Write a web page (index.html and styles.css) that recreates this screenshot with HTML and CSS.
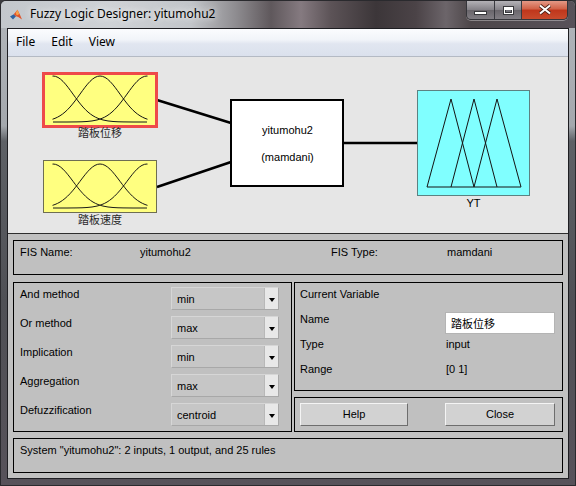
FILE: index.html
```html
<!DOCTYPE html>
<html lang="en">
<head>
<meta charset="utf-8">
<title>Fuzzy Logic Designer: yitumohu2</title>
<link rel="stylesheet" href="styles.css">
</head>
<body>
<div class="window">
  <div class="titlebar">
    <svg class="appicon" width="12" height="12" viewBox="0 0 16 16">
      <polygon points="0,10 5,7 8,9.5 4,14" fill="#2f62a0"/>
      <polygon points="5,7 10,1 13,7 16,14 11,10.5 8,9.5" fill="#e0542a"/>
      <polygon points="10,1 12.5,6.5 9,8.5 7.5,5" fill="#f7a04a"/>
    </svg>
    <span class="title">Fuzzy Logic Designer: yitumohu2</span>
    <div class="controls">
      <div class="ctl ctl-min"><span class="glyph-min"></span></div>
      <div class="ctl ctl-max"><span class="glyph-max"></span></div>
      <div class="ctl ctl-close">
        <svg width="14" height="11" viewBox="0 0 14 11">
          <path d="M2,1.5 L12,9.5 M12,1.5 L2,9.5" stroke="#4a2218" stroke-width="3.6" fill="none"/>
          <path d="M2,1.5 L12,9.5 M12,1.5 L2,9.5" stroke="#ffffff" stroke-width="2" fill="none"/>
        </svg>
      </div>
    </div>
  </div>
  <div class="client">
    <div class="menubar">
      <span class="menu-item">File</span>
      <span class="menu-item">Edit</span>
      <span class="menu-item">View</span>
    </div>
    <div class="diagram">
      <svg class="canvas" width="560" height="176" viewBox="8 57 560 176">
        <defs>
          <path id="gauss" d="M-94,0 L-80,0 L-70,-0.1 L-65,-0.23 L-60,-0.51 L-55,-1.05 L-50,-2.02 L-47.5,-2.74 L-45,-3.66 L-42.5,-4.81 L-40,-6.22 L-37.5,-7.93 L-35,-9.95 L-32.5,-12.29 L-30,-14.94 L-27.5,-17.88 L-25,-21.06 L-22.5,-24.43 L-20,-27.9 L-17.5,-31.37 L-15,-34.72 L-12.5,-37.84 L-10,-40.6 L-7.5,-42.88 L-5,-44.58 L-2.5,-45.64 L0,-46 L2.5,-45.64 L5,-44.58 L7.5,-42.88 L10,-40.6 L12.5,-37.84 L15,-34.72 L17.5,-31.37 L20,-27.9 L22.5,-24.43 L25,-21.06 L27.5,-17.88 L30,-14.94 L32.5,-12.29 L35,-9.95 L37.5,-7.93 L40,-6.22 L42.5,-4.81 L45,-3.66 L47.5,-2.74 L50,-2.02 L55,-1.05 L60,-0.51 L65,-0.23 L70,-0.1 L80,0 L94,0"/>
          <clipPath id="clip1"><rect x="52.5" y="70" width="95" height="60"/></clipPath>
          <clipPath id="clip2"><rect x="52.5" y="158" width="95" height="60"/></clipPath>
        </defs>

        <line x1="157" y1="100" x2="231" y2="123" class="wire"/>
        <line x1="157" y1="187" x2="231" y2="162" class="wire"/>
        <line x1="343" y1="143" x2="418" y2="143" class="wire"/>

        <rect x="43.5" y="73.5" width="113" height="53" class="in-box sel"/>
        <g clip-path="url(#clip1)" class="mf">
          <use href="#gauss" transform="translate(53,122)"/>
          <use href="#gauss" transform="translate(100,122)"/>
          <use href="#gauss" transform="translate(147,122)"/>
        </g>
        <text x="100" y="137" class="cjk-label">踏板位移</text>

        <rect x="43.5" y="160.5" width="113" height="52" class="in-box"/>
        <g clip-path="url(#clip2)" class="mf">
          <use href="#gauss" transform="translate(53,208) scale(1,0.9565)"/>
          <use href="#gauss" transform="translate(100,208) scale(1,0.9565)"/>
          <use href="#gauss" transform="translate(147,208) scale(1,0.9565)"/>
        </g>
        <text x="100" y="224" class="cjk-label">踏板速度</text>

        <rect x="231" y="100" width="112" height="86" class="fis-box"/>
        <text x="287.5" y="133.5" class="fis-text">yitumohu2</text>
        <text x="287.5" y="161" class="fis-text">(mamdani)</text>

        <rect x="417.5" y="90.5" width="112" height="105" class="out-box"/>
        <g class="mf">
          <polyline points="427,187 451,99 474,187"/>
          <polyline points="451,187 474,99 497,187"/>
          <polyline points="474,187 497,99 521,187"/>
          <line x1="427" y1="187" x2="521" y2="187"/>
        </g>
        <text x="473.5" y="207" class="fis-text">YT</text>
      </svg>
    </div>
    <div class="panel">
      <div class="box fis-row">
        <span>FIS Name:</span>
        <span>yitumohu2</span>
        <span>FIS Type:</span>
        <span>mamdani</span>
      </div>
      <div class="mid-row">
        <div class="box methods">
          <div class="method-row"><span class="m-label">And method</span><div class="dd"><span class="dd-text">min</span><span class="dd-arrow"></span></div></div>
          <div class="method-row"><span class="m-label">Or method</span><div class="dd"><span class="dd-text">max</span><span class="dd-arrow"></span></div></div>
          <div class="method-row"><span class="m-label">Implication</span><div class="dd"><span class="dd-text">min</span><span class="dd-arrow"></span></div></div>
          <div class="method-row"><span class="m-label">Aggregation</span><div class="dd"><span class="dd-text">max</span><span class="dd-arrow"></span></div></div>
          <div class="method-row"><span class="m-label">Defuzzification</span><div class="dd"><span class="dd-text">centroid</span><span class="dd-arrow"></span></div></div>
        </div>
        <div class="right-col">
          <div class="box curvar">
            <div class="cv-row"><span>Current Variable</span></div>
            <div class="cv-row"><span class="cv-label">Name</span><div class="name-field">踏板位移</div></div>
            <div class="cv-row"><span class="cv-label">Type</span><span class="cv-value">input</span></div>
            <div class="cv-row"><span class="cv-label">Range</span><span class="cv-value">[0 1]</span></div>
          </div>
          <div class="box buttons">
            <div class="btn btn-help">Help</div>
            <div class="btn btn-close">Close</div>
          </div>
        </div>
      </div>
      <div class="box status">System "yitumohu2": 2 inputs, 1 output, and 25 rules</div>
    </div>
  </div>
</div>
</body>
</html>
```

FILE: styles.css
```css
* { box-sizing: border-box; }
html, body { margin: 0; padding: 0; }
body {
  width: 576px;
  height: 486px;
  overflow: hidden;
  background: #3b3b3f;
  font-family: "Liberation Sans", Arial, sans-serif;
  font-size: 11px;
  color: #000;
}

.window {
  width: 576px;
  height: 486px;
  display: flex;
  flex-direction: column;
  padding: 0 6px 6px 6px;
  border: 1px solid #2a2a2e;
  border-radius: 6px 6px 0 0;
  overflow: hidden;
  background:
    linear-gradient(to bottom, #b2b6bb 0px, #a4a8ad 125px, #5e6166 140px, #4f5055 300px, #57525a 486px);
}

/* ---------- title bar ---------- */
.titlebar {
  height: 27px;
  margin: 0 -6px;
  display: flex;
  align-items: flex-start;
  background: linear-gradient(90deg, #c3c7cc 0px, #cfd2d6 110px, #c2c5c9 190px, #8e8c90 235px, #5f585c 270px, #857a80 300px, #5c5357 330px, #3c3639 375px, #4b4347 415px, #6c656a 445px, #4d4649 470px, #58525a 575px);
  border-bottom: 0;
}
.appicon {
  margin: 8px 0 0 9px;
  flex: none;
}
.title {
  margin-left: 8px;
  margin-top: 4px;
  font-family: "Noto Sans", "Open Sans", sans-serif;
  font-size: 12px;
  line-height: 17px;
  color: #000;
  text-shadow: 0 0 6px rgba(255,255,255,0.9), 0 0 12px rgba(255,255,255,0.6);
}
.controls {
  margin-left: auto;
  margin-right: 7px;
  margin-top: -1px;
  height: 20px;
  display: flex;
  border: 1px solid #35353a;
  border-top: none;
  border-radius: 0 0 5px 5px;
  overflow: hidden;
  box-shadow: 0 1px 0 rgba(255,255,255,0.35);
}
.ctl {
  height: 19px;
  display: flex;
  justify-content: center;
  align-items: flex-start;
}
.ctl-min {
  width: 27px;
  padding-top: 11px;
  background: linear-gradient(to bottom, rgba(220,220,225,0.75) 0%, rgba(170,170,178,0.6) 50%, rgba(120,118,125,0.6) 51%, rgba(150,148,155,0.7) 100%);
}
.ctl-max {
  width: 27px;
  padding-top: 6px;
  border-left: 1px solid #3a3a40;
  background: linear-gradient(to bottom, rgba(220,220,225,0.75) 0%, rgba(170,170,178,0.6) 50%, rgba(120,118,125,0.6) 51%, rgba(150,148,155,0.7) 100%);
}
.ctl-close {
  width: 46px;
  padding-top: 4px;
  border-left: 1px solid #3a3a40;
  background: linear-gradient(to bottom, #e6a08e 0%, #d2644a 45%, #c0371c 55%, #c84a2c 100%);
}
.glyph-min {
  width: 13px;
  height: 4px;
  background: #fff;
  border: 1px solid #38383c;
}
.glyph-max {
  width: 11px;
  height: 9px;
  border: 1px solid #38383c;
  background: rgba(120,120,128,0.6);
  box-shadow: inset 0 0 0 1px #fff, inset 0 2px 0 1px #fff, inset 0 0 0 2px #38383c;
}

/* ---------- client ---------- */
.client {
  flex: 1;
  display: flex;
  flex-direction: column;
  border: 1px solid #1e1e22;
  background: #c0c0c0;
}
.menubar {
  height: 28px;
  display: flex;
  align-items: center;
  border-bottom: 1px solid #b4bac4;
  background: linear-gradient(to bottom, #fbfcfe 0%, #f1f4f9 40%, #e1e6f0 55%, #dbe1ed 100%);
  font-family: "Noto Sans", "Open Sans", sans-serif;
  font-size: 12px;
  color: #000;
}
.menu-item {
  padding: 0 8px;
  line-height: 18px;
  margin-top: -1px;
}

.diagram {
  height: 177px;
  background: #e6e6e6;
  border-bottom: 1px solid #2e2e2e;
}
.canvas { display: block; }
.wire { stroke: #000; stroke-width: 2.6; }
.in-box { fill: #ffff80; stroke: #6e6e52; stroke-width: 1; }
.in-box.sel { stroke: #ee4a4a; stroke-width: 3; }
.fis-box { fill: #fff; stroke: #000; stroke-width: 2; }
.out-box { fill: #80ffff; stroke: #5c8282; stroke-width: 1; }
.mf use, .mf polyline, .mf line { fill: none; stroke: #141414; stroke-width: 1; }
.cjk-label {
  font-family: "Noto Sans CJK SC", sans-serif;
  font-size: 11px;
  text-anchor: middle;
  fill: #2a2a2a;
}
.fis-text {
  font-family: "Liberation Sans", Arial, sans-serif;
  font-size: 11px;
  text-anchor: middle;
  fill: #000;
}

/* ---------- lower panel ---------- */
.panel {
  height: 244px;
  display: flex;
  flex-direction: column;
  padding: 6px 5px 5px 5px;
  background: #c0c0c0;
}
.box { border: 1px solid #000; }
.fis-row {
  height: 35px;
  display: grid;
  grid-template-columns: 120px 191px 116px 1fr;
  padding: 5px 0 0 6px;
  line-height: 13px;
}
.mid-row {
  margin-top: 7px;
  height: 150px;
  display: grid;
  grid-template-columns: 279px 269px;
  column-gap: 2px;
}
.methods {
  display: flex;
  flex-direction: column;
  gap: 6px;
  padding: 4px 11px 5px 6px;
}
.method-row {
  height: 23px;
  display: flex;
  align-items: flex-start;
}
.m-label {
  width: 151px;
  line-height: 14px;
}
.dd {
  width: 108px;
  height: 23px;
  display: flex;
  border: 1px solid #d6d6d6;
  border-right-color: #a8a8a8;
  border-bottom-color: #a8a8a8;
  background: #c6c6c6;
}
.dd-text {
  flex: 1;
  padding-left: 5px;
  line-height: 21px;
  padding-top: 1px;
}
.dd-arrow {
  width: 14px;
  height: 21px;
  background: #e8e8e8;
  border-left: 1px solid #b8b8b8;
  display: flex;
  justify-content: center;
  align-items: center;
  padding-top: 2px;
}
.dd-arrow::after {
  content: "";
  width: 0;
  height: 0;
  border-left: 3.5px solid transparent;
  border-right: 3.5px solid transparent;
  border-top: 4px solid #000;
}
.right-col {
  display: flex;
  flex-direction: column;
  gap: 6px;
}
.curvar {
  height: 109px;
  padding: 4px 6px 0 5px;
}
.cv-row {
  height: 25px;
  display: flex;
  align-items: flex-start;
  line-height: 14px;
}
.cv-label { width: 145px; }
.cv-value { padding-left: 1px; }
.name-field {
  width: 110px;
  height: 22px;
  background: #fff;
  border: 1px solid #b4b4b4;
  font-family: "Noto Sans CJK SC", sans-serif;
  font-size: 11px;
  line-height: 20px;
  padding-left: 5px;
  color: #000;
}
.buttons {
  height: 35px;
  display: flex;
  align-items: flex-start;
  padding: 5px 0 0 5px;
}
.btn {
  height: 23px;
  line-height: 21px;
  text-align: center;
  background: #d2d2d2;
  border: 1px solid;
  border-color: #f4f4f4 #6e6e6e #6e6e6e #f4f4f4;
}
.btn-help { width: 108px; }
.btn-close { width: 110px; margin-left: 37px; }
.status {
  margin-top: 6px;
  height: 35px;
  padding: 5px 0 0 6px;
  line-height: 13px;
}
```
